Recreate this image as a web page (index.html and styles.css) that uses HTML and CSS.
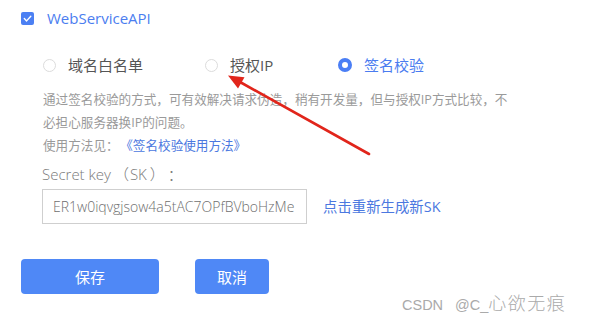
FILE: index.html
```html
<!DOCTYPE html>
<html lang="zh-CN">
<head>
<meta charset="utf-8">
<title>WebServiceAPI</title>
<link rel="stylesheet" href="styles.css">
</head>
<body>
<div class="page">
  <div class="head">
    <span class="checkbox">
      <svg viewBox="0 0 13 13" width="13" height="13"><path d="M3.3 6.6 L5.6 8.9 L9.8 4.3" fill="none" stroke="#fff" stroke-width="1.4" stroke-linecap="round" stroke-linejoin="round"/></svg>
    </span>
    <span class="head-label">WebServiceAPI</span>
  </div>

  <div class="radios">
    <label class="radio r1"><span class="dot"></span><span class="radio-text">域名白名单</span></label>
    <label class="radio r2"><span class="dot"></span><span class="radio-text">授权IP</span></label>
    <label class="radio r3 checked"><span class="dot"></span><span class="radio-text">签名校验</span></label>
  </div>

  <div class="desc">
    <p class="desc-text">通过签名校验的方式，可有效解决请求伪造，稍有开发量，但与授权IP方式比较，不必担心服务器换IP的问题。</p>
    <p class="desc-use">使用方法见：<a class="link doc-link">《签名校验使用方法》</a></p>
  </div>

  <div class="sk">
    <div class="sk-label">Secret key<span class="paren">（</span>SK<span class="paren">）</span><span class="colon">：</span></div>
    <div class="sk-row">
      <div class="sk-input">ER1w0iqvgjsow4a5tAC7OPfBVboHzMe</div>
      <a class="link regen">点击重新生成新SK</a>
    </div>
  </div>

  <div class="actions">
    <button class="btn btn-save">保存</button>
    <button class="btn btn-cancel">取消</button>
  </div>

  <div class="watermark"><span class="wm-latin">CSDN</span><span class="wm-latin wm-at">@C_</span><span class="wm-cjk">心欲无痕</span></div>

  <svg class="arrow" viewBox="0 0 590 320" width="590" height="320">
    <line x1="369" y1="154" x2="240" y2="82" stroke="#e1251b" stroke-width="2.6" stroke-linecap="round"/>
    <polygon points="228,75.5 244.5,77.2 238,88.5" fill="#e1251b"/>
  </svg>
</div>
</body>
</html>
```

FILE: styles.css
```css
* { box-sizing: border-box; }
html, body {
  margin: 0;
  padding: 0;
  background: #ffffff;
}
body {
  width: 590px;
  height: 320px;
  overflow: hidden;
  font-family: "Open Sans", "Noto Sans CJK SC", sans-serif;
}
.page {
  position: relative;
  width: 590px;
  height: 320px;
  padding: 11px 0 0 21px;
}
.head {
  display: flex;
  align-items: center;
  height: 14px;
  gap: 13px;
}
.checkbox {
  width: 13px;
  height: 13px;
  border-radius: 2px;
  background: #4c80f3;
  display: flex;
}
.head-label {
  font-size: 15px;
  color: #4b7ef0;
  line-height: 14px;
}
.radios {
  display: flex;
  align-items: center;
  margin: 32px 0 0 22px;
  height: 16px;
}
.radio {
  display: flex;
  align-items: center;
  gap: 12px;
  font-size: 15px;
  color: #555;
  line-height: 16px;
}
.r1 { width: 162px; }
.r2 { width: 133px; }
.dot {
  width: 13px;
  height: 13px;
  border-radius: 50%;
  border: 1px solid #dcdcdc;
  background: #fff;
}
.checked .dot {
  width: 14px;
  height: 14px;
  border: 4.5px solid #4a7ef5;
  background: #fff;
}
.checked .radio-text { color: #4a7cf0; }
.desc {
  margin: 15px 0 0 22px;
  width: 470px;
  font-size: 12.6px;
  color: #9a9a9a;
  line-height: 23px;
}
.desc p { margin: 0; }
.link {
  color: #4b78e0;
  text-decoration: none;
}
.doc-link { margin-left: 8px; }
.sk {
  margin: 9px 0 0 21px;
}
.sk-label {
  font-size: 15px;
  font-weight: 300;
  color: #7a7a7a;
  line-height: 17px;
}
.paren {
  display: inline-block;
  font-weight: 300;
  margin: 0 1px 0 3px;
}
.colon { margin-left: 2px; }
.sk-row {
  display: flex;
  align-items: center;
  gap: 16px;
  margin-top: 6px;
}
.sk-input {
  width: 265px;
  height: 35px;
  border: 1px solid #cfcfcf;
  padding-left: 10px;
  font-size: 14px;
  font-weight: 300;
  color: #6e6e6e;
  line-height: 33px;
  white-space: nowrap;
  overflow: hidden;
}
.regen {
  font-size: 14.4px;
  line-height: 16px;
}
.actions {
  display: flex;
  gap: 36px;
  margin-top: 35px;
}
.btn {
  height: 35px;
  border: none;
  border-radius: 4px;
  background: #4f88f6;
  color: #fff;
  font-family: "Noto Sans CJK SC", sans-serif;
  font-size: 15px;
  padding: 0;
}
.btn-save { width: 138px; }
.btn-cancel { width: 74px; }
.watermark {
  position: absolute;
  left: 402px;
  top: 292px;
  display: flex;
  align-items: baseline;
  color: #aaaaaa;
  line-height: 20px;
}
.wm-latin {
  font-family: "Liberation Sans", sans-serif;
  font-size: 14.5px;
}
.wm-at { margin-left: 12px; }
.wm-cjk {
  font-family: "Noto Sans CJK SC", sans-serif;
  font-size: 18px;
  font-weight: 300;
  letter-spacing: 1.5px;
}
.arrow {
  position: absolute;
  left: 0;
  top: 0;
  pointer-events: none;
}
```
